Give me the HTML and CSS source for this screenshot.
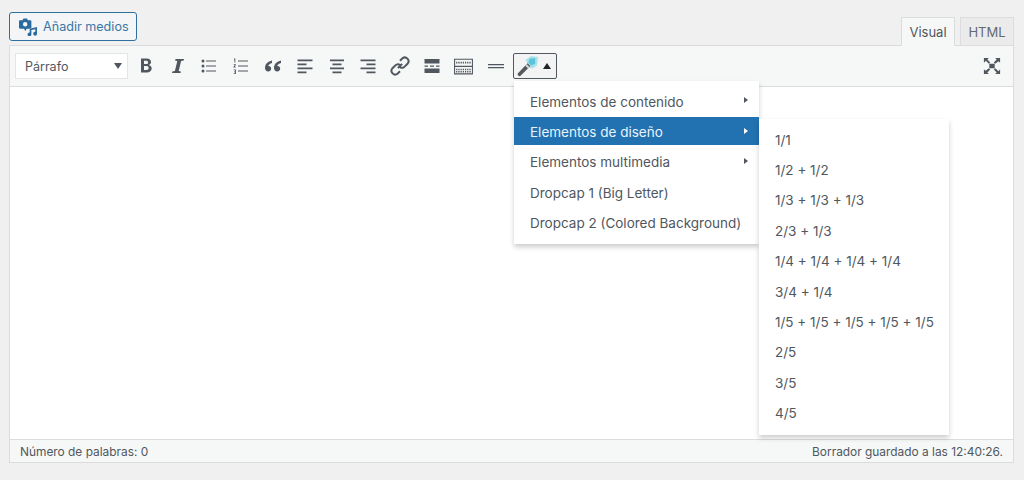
FILE: index.html
```html
<!DOCTYPE html>
<html lang="es">
<head>
<meta charset="utf-8">
<title>Editor</title>
<link rel="stylesheet" href="styles.css">
</head>
<body>
<div class="page">
  <div class="tools">
    <button class="media-btn">
      <svg class="media-ico" viewBox="0 0 16 16"><path fill="#2b6a9d" fill-rule="evenodd" d="M1 2h2L4 .5h3L8 2h2c.6 0 1 .4 1 1v5.500c0 .6-.4 1-1 1H7l-1.500 2-1-2H1c-.6 0-1-.4-1-1V3c0-.6.4-1 1-1zM5.500 3.500a2 2 0 1 0 0 4 2 2 0 0 0 0-4z"/><path fill="#2b6a9d" d="M9.500 9.500 16 8v6a1.700 1.700 0 1 1-1.500-1.700v-2.400l-3.500.8v3.800a1.700 1.700 0 1 1-1.500-1.700z"/></svg>
      Añadir medios
    </button>
    <div class="tabs">
      <span class="tab tab-active">Visual</span>
      <span class="tab">HTML</span>
    </div>
  </div>
  <div class="editor">
    <div class="toolbar">
      <div class="select"><span>Párrafo</span><i class="caret"></i></div>
      <div class="icons">
        <span class="ib"><svg viewBox="0 0 20 20"><path d="M5 2.500h5.800c2.600 0 4.200 1.300 4.200 3.400 0 1.500-.9 2.600-2.300 3 1.800.3 3 1.600 3 3.400 0 2.500-1.900 4.200-4.900 4.200H5zm3 2.300v3.200h2.200c1.200 0 1.900-.6 1.900-1.600s-.7-1.600-1.900-1.600zm0 5.300v3.900h2.500c1.400 0 2.200-.7 2.200-1.900s-.8-2-2.200-2z"/></svg></span>
        <span class="ib"><svg viewBox="0 0 20 20"><path d="M7.500 3h8.500l-.3 1.500-2.600.6-2.400 9.800 2.200.6-.3 1.500H4l.3-1.500 2.600-.6 2.400-9.800-2.200-.6z"/></svg></span>
        <span class="ib"><svg viewBox="0 0 20 20"><circle cx="4" cy="5" r="1.500"/><circle cx="4" cy="10" r="1.500"/><circle cx="4" cy="15" r="1.500"/><path d="M7 4.500h10v1H7zM7 9.500h10v1H7zM7 14.500h10v1H7z"/></svg></span>
        <span class="ib"><svg viewBox="0 0 20 20"><path d="M3 2.500h1.300v4H3.400V3.500H3zM2.700 8.200h2.100v.8l-1.200 1.700h1.200v.8H2.500v-.7l1.300-1.800H2.700zM2.700 13.500h2.200v4.500H2.700v-.8h1.300v-1H3v-.7h1v-1.200H2.700z"/><path d="M7 4.500h10v1H7zM7 9.500h10v1H7zM7 14.500h10v1H7z"/></svg></span>
        <span class="ib"><svg viewBox="0 0 20 20"><path d="M9 4.500C5 5.500 2 8 2 11.800 2 14 3.300 15.500 5.200 15.500c1.800 0 3-1.200 3-2.900 0-1.600-1.100-2.700-2.600-2.700h-.4c.4-1.200 2-2.400 3.800-3zM18 4.500c-4 1-7 3.500-7 7.300 0 2.200 1.300 3.700 3.200 3.700 1.800 0 3-1.200 3-2.900 0-1.600-1.100-2.700-2.600-2.700h-.4c.4-1.200 2-2.400 3.800-3z"/></svg></span>
        <span class="ib"><svg viewBox="0 0 20 20"><path d="M2.500 3.500h15v1.700h-15zM2.500 7.500h9v1.700h-9zM2.500 11.500h15v1.700h-15zM2.500 15.500h9v1.700h-9z"/></svg></span>
        <span class="ib"><svg viewBox="0 0 20 20"><path d="M3 3.500h14v1.700H3zM5.500 7.500h9v1.700h-9zM3 11.500h14v1.700H3zM5.500 15.500h9v1.700h-9z"/></svg></span>
        <span class="ib"><svg viewBox="0 0 20 20"><path d="M2.500 3.500h15v1.700h-15zM8.500 7.500h9v1.700h-9zM2.500 11.500h15v1.700h-15zM8.500 15.500h9v1.700h-9z"/></svg></span>
        <span class="ib"><svg viewBox="2 2 16 16"><path fill="none" stroke="#50575e" stroke-width="1.600" d="M8.300 11.700 11.700 8.300M10 5.800l2-2a3 3 0 0 1 4.200 4.200l-2.500 2.500a3 3 0 0 1-3.700.4M10 14.200l-2 2A3 3 0 0 1 3.800 12l2.500-2.500a3 3 0 0 1 3.700-.4"/></svg></span>
        <span class="ib"><svg viewBox="0 0 20 20"><path d="M2.500 3h15v4.500h-15zM2.500 12.500h15V17h-15zM2.500 9.500h3.500v1.200H2.500zM8 9.500h4v1.200H8zM14 9.500h3.500v1.200H14z"/></svg></span>
        <span class="ib ib-kb"><svg viewBox="0 0 20 20"><path fill="none" stroke="#50575e" d="M1.500 3h17v14h-17z"/><path d="M1.500 9.300h17v1.200h-17z"/><path stroke="#50575e" stroke-width="1.500" stroke-dasharray="1.200 .9" d="M3 6.300h14M3 12.800h14M3 15h14"/></svg></span>
        <span class="ib"><svg viewBox="0 0 20 20"><path d="M2 8h16v1.300H2zM2 11h16v1.300H2z"/></svg></span>
      </div>
      <div class="magic">
        <svg class="wand" viewBox="0 0 24 24"><path fill="#a9e2ec" d="M10 5l6-4 7 1-1 9-5 3-3-1z"/><path fill="#5cc4d8" d="M14 4l6-1v6l-4 2-3-3z"/><path fill="#55595e" d="M12 8.500l3 3L5 21.500c-.8.800-2 .8-2.700 0s-.8-1.900 0-2.700z"/><path fill="#d5d7d9" d="M11 9.500l3 3-1.500 1.500-3-3z"/></svg>
        <i class="up"></i>
      </div>
      <svg class="fs" viewBox="0 0 20 20"><path d="M7 7.500h6v5H7zM1 1h5.500L4.800 2.800 8 6l-1.500 1.500L3.200 4.300 1 6.500zM19 1v5.500l-1.800-1.700L13.500 7.500 12 6l3.200-3.200L13.500 1zM1 19v-5.500l1.800 1.700L6.500 12.500 8 14l-3.200 3.200L6.500 19zM19 19h-5.500l1.700-1.800L12 14l1.500-1.500 3.700 3.200L19 13.500z"/></svg>
    </div>
    <div class="content"></div>
    <div class="status">
      <span>Número de palabras: 0</span>
      <span>Borrador guardado a las 12:40:26.</span>
    </div>
    <ul class="menu menu-main">
      <li>Elementos de contenido<i class="arrow"></i></li>
      <li class="active">Elementos de diseño<i class="arrow"></i></li>
      <li>Elementos multimedia<i class="arrow"></i></li>
      <li>Dropcap 1 (Big Letter)</li>
      <li>Dropcap 2 (Colored Background)</li>
    </ul>
    <ul class="menu menu-sub">
      <li>1/1</li>
      <li>1/2 + 1/2</li>
      <li>1/3 + 1/3 + 1/3</li>
      <li>2/3 + 1/3</li>
      <li>1/4 + 1/4 + 1/4 + 1/4</li>
      <li>3/4 + 1/4</li>
      <li>1/5 + 1/5 + 1/5 + 1/5 + 1/5</li>
      <li>2/5</li>
      <li>3/5</li>
      <li>4/5</li>
    </ul>
  </div>
</div>
</body>
</html>
```
FILE: styles.css
```css
* { box-sizing: border-box; }
html, body { margin: 0; height: 100%; }
body {
  background: #f0f0f0;
  color: #50575e;
  font-family: Inter, "Liberation Sans", sans-serif;
  font-size: 13px;
  overflow: hidden;
}
.page { width: 1024px; padding: 12px 10px 0 9px; }
.tools {
  display: flex;
  justify-content: space-between;
  align-items: flex-end;
  height: 34px;
  position: relative;
  z-index: 1;
}
.media-btn {
  align-self: flex-start;
  display: flex;
  align-items: center;
  gap: 6px;
  width: 128px;
  height: 29px;
  padding: 0 0 0 9px;
  background: #f3f5f6;
  border: 1px solid #2f6f9f;
  border-radius: 3px;
  color: #3a77a5;
  font: 12.600px Inter, "Liberation Sans", sans-serif;
  white-space: nowrap;
}
.media-ico { width: 18px; height: 18px; flex: none; }
.tabs { display: flex; gap: 5px; }
.tab {
  width: 54px;
  height: 29px;
  display: flex;
  align-items: center;
  justify-content: center;
  border: 1px solid #dcdcde;
  background: #ebebeb;
  color: #646970;
}
.tab-active {
  background: #f6f7f7;
  border-bottom-color: #f6f7f7;
  color: #50575e;
}
.editor { position: relative; margin-top: -1px; width: 1005px; }
.toolbar {
  display: flex;
  align-items: center;
  height: 42px;
  padding: 0 12px 0 5px;
  background: #f6f7f7;
  border: 1px solid #dcdcde;
}
.select {
  display: flex;
  align-items: center;
  justify-content: space-between;
  width: 113px;
  height: 26px;
  padding: 0 5px 0 9px;
  background: #fff;
  border: 1px solid #e4e5e6;
  font-size: 12.500px;
}
.caret {
  width: 0;
  height: 0;
  border-left: 4px solid transparent;
  border-right: 4px solid transparent;
  border-top: 6px solid #50575e;
}
.icons { display: flex; margin-left: 2px; }
.ib {
  width: 31.800px;
  height: 26px;
  display: flex;
  align-items: center;
  justify-content: center;
}
.ib svg { width: 20px; height: 20px; fill: #50575e; }
.ib-kb svg { width: 21px; height: 21px; }
.magic {
  display: flex;
  align-items: center;
  gap: 2px;
  width: 44px;
  height: 26px;
  margin-left: 1px;
  padding-left: 2px;
  background: #f3f3f3;
  border: 1px solid #50575e;
  border-radius: 2px;
}
.wand { width: 23px; height: 23px; flex: none; }
.up {
  width: 0;
  height: 0;
  margin-left: 2px;
  border-left: 4px solid transparent;
  border-right: 4px solid transparent;
  border-bottom: 6px solid #1d2327;
}
.fs { width: 18px; height: 18px; fill: #50575e; margin-left: auto; }
.content {
  height: 352px;
  background: #fff;
  border-left: 1px solid #dcdcde;
  border-right: 1px solid #dcdcde;
}
.status {
  display: flex;
  justify-content: space-between;
  align-items: center;
  height: 24px;
  padding: 0 10px;
  background: #f6f7f7;
  border: 1px solid #dcdcde;
  font-size: 11.900px;
  color: #50575e;
}
.menu {
  position: absolute;
  margin: 0;
  list-style: none;
  background: #fff;
  box-shadow: 0 3px 5px rgba(0, 0, 0, .2);
  font-size: 13.500px;
  color: #50575e;
}
.menu li {
  position: relative;
  display: flex;
  align-items: center;
  height: 28.600px;
  margin-bottom: 1.750px;
  padding: 2px 0 0 16px;
  white-space: nowrap;
}
.menu-main { left: 505px; top: 36px; width: 245px; height: 163px; padding: 5.300px 0 0; }
.menu-sub { left: 750px; top: 74px; width: 190px; height: 316px; padding: 5.500px 0 0; }
.menu .active { background: #2271b1; color: #e8f3fb; }
.arrow {
  position: absolute;
  right: 11px;
  top: 11px;
  border-top: 3.500px solid transparent;
  border-bottom: 3.500px solid transparent;
  border-left: 4px solid #50575e;
}
.active .arrow { border-left-color: #fff; }
```
